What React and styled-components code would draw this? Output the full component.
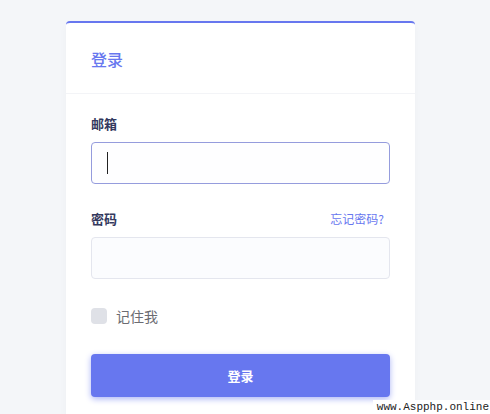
import React from "react";
import styled, { createGlobalStyle } from "styled-components";

const Global = createGlobalStyle`
  html, body { margin: 0; padding: 0; background: #f4f6f9; }
  body { font-family: "Noto Sans CJK SC", "Noto Sans", sans-serif; overflow: hidden; }
  * { box-sizing: border-box; }
`;

const Page = styled.div`
  position: relative;
  height: 414px;
  padding-top: 21px;
  padding-left: 66px;
  overflow: hidden;
`;

const Card = styled.div`
  width: 349px;
  height: 393px;
  background: #fff;
  border-top: 2px solid #6777ef;
  border-radius: 4px 4px 0 0;
  box-shadow: 0 4px 8px rgba(0, 0, 0, 0.03);
`;

const Header = styled.div`
  height: 71px;
  display: flex;
  align-items: center;
  padding: 0 25px;
  border-bottom: 1px solid #f3f4f7;
`;

const Title = styled.h4`
  margin: 0;
  font-size: 16px;
  font-weight: 500;
  color: #6777ef;
  line-height: 20px;
  padding-top: 1px;
`;

const Body = styled.div`
  padding: 22px 25px 0;
  display: flex;
  flex-direction: column;
`;

const Group = styled.div`
  margin-bottom: ${(p) => p.$mb || 27}px;
`;

const LabelRow = styled.div`
  display: flex;
  justify-content: space-between;
  align-items: center;
  height: 16px;
  margin-bottom: 10px;
  padding-right: 6px;
`;

const Label = styled.label`
  font-size: 13px;
  font-weight: 700;
  color: #34395e;
  line-height: 16px;
`;

const Link = styled.a`
  font-size: 12px;
  color: #6777ef;
  text-decoration: none;
  line-height: 16px;
`;

const Input = styled.div`
  position: relative;
  height: 42px;
  border-radius: 4px;
  border: 1px solid ${(p) => (p.$focus ? "#959cdd" : "#e4e6ee")};
  background: ${(p) => (p.$focus ? "#fefeff" : "#fbfcfe")};
`;

const Caret = styled.span`
  position: absolute;
  left: 15px;
  top: 9px;
  width: 1px;
  height: 22px;
  background: #222;
`;

const CheckRow = styled.div`
  display: flex;
  align-items: center;
  gap: 9px;
  height: 16px;
  margin-bottom: 30px;
`;

const Box = styled.span`
  width: 16px;
  height: 16px;
  border-radius: 4px;
  background: #dfe1e7;
`;

const CheckText = styled.span`
  font-size: 14px;
  color: #6c6c72;
  line-height: 16px;
  margin-top: -1px;
`;

const Button = styled.button`
  height: 43px;
  width: 100%;
  border: none;
  border-radius: 4px;
  background: #6777ef;
  color: #fff;
  font-family: inherit;
  font-size: 13px;
  font-weight: 700;
  padding-bottom: 2px;
  box-shadow: 0 2px 6px #acb5f6;
`;

const Watermark = styled.div`
  position: absolute;
  right: 0;
  bottom: 0;
  background: #fff;
  padding: 1px 1px 1px 4px;
  font-family: "Liberation Mono", monospace;
  font-size: 11px;
  color: #222;
  line-height: 12px;
`;

export default function App() {
  return (
    <>
      <Global />
      <Page>
        <Card>
          <Header>
            <Title>登录</Title>
          </Header>
          <Body>
            <Group>
              <LabelRow>
                <Label>邮箱</Label>
              </LabelRow>
              <Input $focus>
                <Caret />
              </Input>
            </Group>
            <Group $mb={29}>
              <LabelRow>
                <Label>密码</Label>
                <Link href="#">忘记密码?</Link>
              </LabelRow>
              <Input />
            </Group>
            <CheckRow>
              <Box />
              <CheckText>记住我</CheckText>
            </CheckRow>
            <Button>登录</Button>
          </Body>
        </Card>
        <Watermark>www.Aspphp.online</Watermark>
      </Page>
    </>
  );
}
